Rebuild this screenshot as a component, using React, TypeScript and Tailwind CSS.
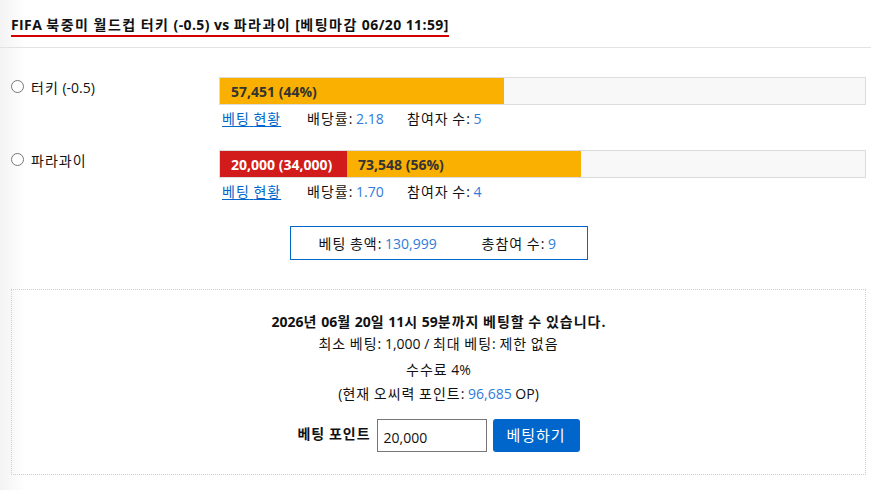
const font = "font-['Open_Sans','Noto_Sans_CJK_KR',sans-serif]";

const HANGUL = /([\uAC00-\uD7A3\u3131-\u318E]+)/;
function K({ children, wide }: { children: string; wide?: boolean }) {
  return (
    <>
      {children.split(HANGUL).map((part, i) =>
        HANGUL.test(part) ? (
          <span key={i} className={wide ? "tracking-[1.5px]" : "tracking-[1px]"}>
            {part}
          </span>
        ) : (
          part
        ),
      )}
    </>
  );
}

interface Option {
  label: string;
  share: number;
  mine?: string;
  amount: string;
  odds: string;
  players: number;
}

const options: Option[] = [
  { label: "터키 (-0.5)", share: 44, amount: "57,451 (44%)", odds: "2.18", players: 5 },
  { label: "파라과이", share: 56, mine: "20,000 (34,000)", amount: "73,548 (56%)", odds: "1.70", players: 4 },
];

function OptionRow({ option }: { option: Option }) {
  return (
    <div className="flex">
      <label className="flex w-[208px] shrink-0 items-start gap-[7px] pt-[2px] text-[14px] leading-[16px] text-[#111]">
        <input type="radio" name="pick" className="m-0 mt-[1px] h-[13px] w-[13px]" />
        <span className="mt-[1px]">
          <K>{option.label}</K>
        </span>
      </label>
      <div className="flex-1">
        <div className="flex h-[28px] border border-[#dcdcdc] bg-[#f8f8f8]">
          <div className="flex h-full" style={{ width: `${option.share}%` }}>
            {option.mine && (
              <div className="flex w-[127px] shrink-0 items-center bg-[#d21b1b] pl-[11px] text-[14px] font-bold whitespace-nowrap text-white">
                {option.mine}
              </div>
            )}
            <div className="flex flex-1 items-center bg-[#f9b000] px-[11px] text-[14px] font-bold whitespace-nowrap text-[#333]">
              {option.amount}
            </div>
          </div>
        </div>
        <div className="mt-[6px] ml-[3px] flex text-[14px] leading-[16px] text-[#111]">
          <a href="#" className="w-[85px] text-[#0066cc]">
            <span className="underline underline-offset-2">
              <K>베팅 현황</K>
            </span>
          </a>
          <span className="w-[100px]">
            <K>배당률:</K> <span className="text-[#2f7bd9]">{option.odds}</span>
          </span>
          <span>
            <K>참여자 수:</K> <span className="text-[#2f7bd9]">{option.players}</span>
          </span>
        </div>
      </div>
    </div>
  );
}

export default function App() {
  return (
    <div
      className={`min-h-[490px] w-[871px] bg-[linear-gradient(to_right,#f3f3f3,#fff_26px)] ${font}`}
    >
      <header className="h-[48px] border-b border-[#e3e3e3] pt-[12px] pl-[11px]">
        <h1 className="inline-block border-b-2 border-[#d40000] pb-[1px] text-[14px] leading-[18px] font-bold tracking-[0.4px] text-[#111]">
          <K wide>FIFA 북중미 월드컵 터키 (-0.5) vs 파라과이 [베팅마감 06/20 11:59]</K>
        </h1>
      </header>

      <main className="pt-[29px] pr-[5px] pl-[11px]">
        <div className="flex flex-col gap-[23px]">
          {options.map((o) => (
            <OptionRow key={o.label} option={o} />
          ))}
        </div>

        <div className="mt-[26px] flex justify-center">
          <div className="flex h-[34px] w-[298px] items-center border border-[#0066cc] pl-[28px] text-[14px] text-[#111]">
            <span className="w-[163px]">
              <K>베팅 총액:</K> <span className="text-[#2f7bd9]">130,999</span>
            </span>
            <span>
              <K>총참여 수:</K> <span className="text-[#2f7bd9]">9</span>
            </span>
          </div>
        </div>

        <section className="mt-[29px] border border-dotted border-[#cfcfcf] pt-[22px] pb-[22px] text-center text-[14px] text-[#111]">
          <p className="leading-[20px] font-bold">
            <K>2026년 06월 20일 11시 59분까지 베팅할 수 있습니다.</K>
          </p>
          <p className="mb-[2px] leading-[24px]">
            <K>최소 베팅: 1,000 / 최대 베팅: 제한 없음</K>
          </p>
          <p className="leading-[24px]">
            <K>수수료 4%</K>
          </p>
          <p className="leading-[24px]">
            <K>(현재 오씨력 포인트:</K> <span className="text-[#2f7bd9]">96,685</span> OP)
          </p>
          <div className="mt-[13px] flex items-center justify-center gap-[6px]">
            <span className="mb-[5px] font-bold">
              <K>베팅 포인트</K>
            </span>
            <input
              type="text"
              defaultValue="20,000"
              className="h-[33px] w-[110px] border border-[#767676] px-[6px] pt-[3px] text-[14px] text-[#111] outline-none"
            />
            <button className="h-[33px] w-[87px] rounded-[3px] bg-[#0066cc] text-[15px] text-white">
              <K>베팅하기</K>
            </button>
          </div>
        </section>
      </main>
    </div>
  );
}
